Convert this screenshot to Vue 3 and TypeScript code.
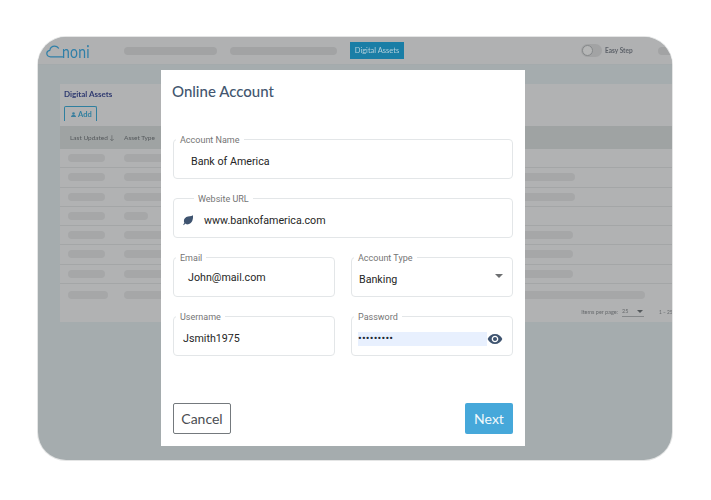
<script setup lang="ts">
interface Row { first: number; second: number; third: number }
const rows: Row[] = [
  { first: 37, second: 50, third: 0 },
  { first: 37, second: 50, third: 395 },
  { first: 37, second: 50, third: 395 },
  { first: 37, second: 24, third: 0 },
  { first: 37, second: 50, third: 393 },
  { first: 37, second: 50, third: 393 },
  { first: 37, second: 50, third: 393 },
  { first: 40, second: 50, third: 465 },
]
</script>

<template>
  <div class="page">
    <div class="frame">
      <div class="backdrop">
        <header class="topbar">
          <svg class="logo-cloud" width="17" height="14" viewBox="0 0 17 14" fill="none">
            <path d="M16.500 12.800H4.500C2.300 12.800 0.800 11.400 0.800 9.500C0.800 7.800 2 6.500 3.800 6.300C4.300 3.800 6.200 2.200 8.600 2.200C10.300 2.200 11.600 2.900 12.500 4.100" stroke="#2f7fa8" stroke-width="1.200" stroke-linecap="round" />
          </svg>
          <span class="logo-text">noni</span>
          <span class="bar-pill first"></span>
          <span class="bar-pill second"></span>
          <span class="tab">Digital Assets</span>
          <span class="toggle"><span class="knob"></span></span>
          <span class="easy">Easy Step</span>
          <span class="bar-end"></span>
        </header>
        <div class="content">
          <section class="card">
            <h2 class="card-title">Digital Assets</h2>
            <span class="add">
              <svg width="7" height="5" viewBox="0 0 7 5"><circle cx="3.500" cy="1.500" r="1.300" fill="#3b7f9e" /><path d="M1 5c0-1.500 1-2 2.500-2S6 3.500 6 5z" fill="#3b7f9e" /></svg>
              Add
            </span>
            <div class="thead">
              <span class="th updated">Last Updated ↓</span>
              <span class="th">Asset Type</span>
            </div>
            <div v-for="(row, i) in rows" :key="i" class="row" :class="{ last: i === rows.length - 1 }">
              <span class="slot"><span class="pill" :style="{ width: row.first + 'px' }"></span></span>
              <span class="slot"><span class="pill" :style="{ width: row.second + 'px' }"></span></span>
              <span v-if="row.third" class="pill" :style="{ width: row.third + 'px' }"></span>
            </div>
            <div class="pager">
              <span>Items per page:</span>
              <span class="pager-select">25<i class="pager-arrow"></i></span>
              <span class="pager-range">1 – 25</span>
            </div>
          </section>
        </div>
      </div>

      <div class="modal">
        <h1 class="title">Online Account</h1>
        <div class="form">
          <div class="field">
            <span class="label">Account Name</span>
            <span class="value name">Bank of America</span>
          </div>
          <div class="field">
            <span class="label url-label">Website URL</span>
            <svg class="leaf" width="12" height="12" viewBox="0 0 12 12">
              <path d="M11 1.200C11.300 5 10.300 9.400 6.300 10.300C4.900 10.600 3.800 10.300 3 9.600L2 11.200L1.200 10.700L2.300 8.800C1.400 6.800 2 4.200 4.300 3C6.500 1.900 9 2.800 11 1.200Z" fill="#3f5470" />
            </svg>
            <span class="value url">www.bankofamerica.com</span>
          </div>
          <div class="pair">
            <div class="field">
              <span class="label">Email</span>
              <span class="value email">John@mail.com</span>
            </div>
            <div class="field">
              <span class="label">Account Type</span>
              <span class="value type">Banking</span>
              <i class="caret"></i>
            </div>
          </div>
          <div class="pair">
            <div class="field">
              <span class="label">Username</span>
              <span class="value user">Jsmith1975</span>
            </div>
            <div class="field">
              <span class="label">Password</span>
              <span class="secret">•••••••••</span>
              <svg class="eye" width="16" height="16" viewBox="0 0 24 24">
                <path d="M12 4.500C7 4.500 2.730 7.610 1 12c1.730 4.390 6 7.500 11 7.500s9.270-3.110 11-7.500c-1.730-4.390-6-7.500-11-7.500zM12 17c-2.760 0-5-2.240-5-5s2.240-5 5-5 5 2.240 5 5-2.240 5-5 5zm0-8c-1.660 0-3 1.340-3 3s1.340 3 3 3 3-1.340 3-3-1.340-3-3-3z" fill="#3f5470" />
              </svg>
            </div>
          </div>
        </div>
        <div class="actions">
          <button class="btn cancel" type="button">Cancel</button>
          <button class="btn next" type="button">Next</button>
        </div>
      </div>
    </div>
  </div>
</template>

<style>
html, body { margin: 0; background: #fff; }
</style>

<style scoped>
.page {
  width: 711px;
  height: 500px;
  padding: 37px 39px 40px 38px;
  box-sizing: border-box;
  overflow: hidden;
}
.frame {
  position: relative;
  height: 423px;
  border-radius: 28px;
  overflow: hidden;
  background: #a5acae;
  box-shadow: 0 0 0 1px #e4e5e5;
  font-family: Lato, sans-serif;
}
.backdrop {
  height: 100%;
  display: flex;
  flex-direction: column;
  filter: blur(0.45px);
}
.topbar {
  height: 28px;
  flex: none;
  display: flex;
  align-items: center;
  background: #b0b1b2;
  border-bottom: 1px solid #a4aaac;
  box-sizing: border-box;
  padding-left: 8px;
}
.topbar > * { flex: none; }
.logo-cloud { margin-top: 1px; }
.logo-text {
  width: 25px;
  margin-left: -1px;
  font-size: 14px;
  font-weight: 400;
  line-height: 1;
  letter-spacing: 0.2px;
  color: #2f7fa8;
  transform: scaleY(1.3);
}
.bar-pill {
  height: 8px;
  border-radius: 4px;
  background: #a2a3a4;
}
.bar-pill.first { width: 93px; margin-left: 37px; }
.bar-pill.second { width: 107px; margin-left: 13px; }
.tab {
  width: 54px;
  height: 17px;
  margin-left: 13px;
  background: #1a7ea6;
  color: #b3d0dc;
  font-size: 7.500px;
  line-height: 17px;
  text-align: center;
}
.toggle {
  width: 21px;
  height: 13px;
  margin-left: 177px;
  border-radius: 7px;
  background: #a2a3a4;
}
.knob {
  display: block;
  width: 11px;
  height: 11px;
  margin: 1px;
  border-radius: 50%;
  background: #b5b6b6;
  border: 0.5px solid #85888a;
  box-sizing: border-box;
}
.easy {
  width: 28px;
  margin-left: 3px;
  font-size: 6.500px;
  font-weight: 700;
  color: #5d6269;
  white-space: nowrap;
}
.bar-end {
  width: 30px;
  height: 8px;
  margin-left: 25px;
  border-radius: 4px;
  background: #a2a3a4;
}
.content {
  flex: 1;
  padding: 19px 0 0 22px;
  min-height: 0;
}
.card {
  height: 238px;
  background: #b1b2b3;
  overflow: hidden;
}
.card-title {
  margin: 4px 0 0 4px;
  height: 12px;
  font-size: 8px;
  font-weight: 700;
  line-height: 12px;
  color: #2f3a70;
}
.add {
  display: flex;
  align-items: center;
  gap: 1px;
  width: 33px;
  height: 15px;
  margin: 6px 0 5px 4px;
  padding-left: 5px;
  box-sizing: border-box;
  border: 1px solid #2f7f9f;
  border-bottom: none;
  border-radius: 2px 2px 0 0;
  color: #2f7f9f;
  font-size: 7.500px;
  font-weight: 700;
}
.thead {
  height: 23px;
  display: flex;
  align-items: center;
  background: #9fa3a3;
  padding-left: 10px;
}
.th {
  font-size: 6.500px;
  color: #55595c;
  white-space: nowrap;
}
.updated { width: 54px; }
.row {
  height: 19.250px;
  display: flex;
  align-items: center;
  padding-left: 8px;
  box-sizing: border-box;
  border-bottom: 1px solid #a4a6a7;
}
.row.last {
  height: 22px;
  border-bottom: none;
}
.pill {
  display: block;
  height: 8px;
  border-radius: 4px;
  background: #a6a7a8;
  flex: none;
}
.slot {
  width: 56px;
  flex: none;
}
.pager {
  height: 12px;
  display: flex;
  align-items: center;
  justify-content: flex-end;
  font-size: 5.500px;
  color: #66696c;
  white-space: nowrap;
}
.pager-select {
  position: relative;
  width: 22px;
  margin-left: 4px;
  border-bottom: 1px solid #85888a;
  line-height: 9px;
}
.pager-arrow {
  position: absolute;
  right: 1px;
  top: 3px;
  border: 3px solid transparent;
  border-top-color: #55595c;
  border-bottom: none;
}
.pager-range {
  width: 13px;
  margin-left: 15px;
  font-size: 4.800px;
}
.modal {
  position: absolute;
  left: 123px;
  top: 33px;
  width: 364px;
  height: 376px;
  box-sizing: border-box;
  padding: 12px;
  display: flex;
  flex-direction: column;
  background: #fff;
}
.title {
  margin: 0 0 0 -1px;
  height: 18px;
  font-size: 15px;
  font-weight: 500;
  line-height: 18px;
  color: #43566f;
}
.form {
  margin-top: 39px;
  display: flex;
  flex-direction: column;
  gap: 19px;
}
.pair {
  display: grid;
  grid-template-columns: 162px 162px;
  justify-content: space-between;
}
.field {
  position: relative;
  height: 40px;
  box-sizing: border-box;
  border: 1px solid #e3e6e8;
  border-radius: 4px;
  display: flex;
  align-items: center;
  font-family: Roboto, sans-serif;
  color: #262626;
}
.label {
  position: absolute;
  left: 2px;
  top: -5.500px;
  padding: 0 4px;
  background: #fff;
  font-size: 9px;
  line-height: 11px;
  color: #757575;
}
.url-label { left: 20px; }
.value {
  font-size: 10.700px;
  white-space: nowrap;
}
.name { margin-left: 17px; margin-top: 4px; }
.leaf { margin-left: 8px; margin-top: 4px; flex: none; }
.url { margin-left: 10px; margin-top: 4px; }
.email { margin-left: 14px; }
.type { margin-left: 7px; margin-top: 4px; }
.user { margin-left: 9px; margin-top: 4px; }
.caret {
  position: absolute;
  right: 9px;
  top: 16px;
  border: 4.500px solid transparent;
  border-top: 4px solid #6d6f71;
  border-bottom: none;
}
.secret {
  width: 129px;
  height: 14px;
  margin-left: 6px;
  margin-top: 5px;
  background: #e8f0fe;
  font-size: 11px;
  line-height: 14px;
  color: #1e2a36;
  letter-spacing: 0.2px;
}
.eye {
  position: absolute;
  right: 9px;
  top: 14px;
}
.actions {
  margin-top: auto;
  display: flex;
  justify-content: space-between;
}
.btn {
  height: 31px;
  box-sizing: border-box;
  border-radius: 2px;
  font-family: Lato, sans-serif;
  font-size: 14px;
  padding: 0;
}
.cancel {
  width: 58px;
  background: #fff;
  border: 1px solid #74797d;
  color: #4a4d52;
}
.next {
  width: 48px;
  background: #46a8da;
  border: none;
  color: #f3f9fc;
}
</style>
